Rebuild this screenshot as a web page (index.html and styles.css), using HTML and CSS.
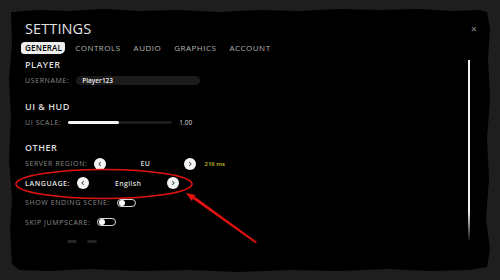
FILE: index.html
```html
<!DOCTYPE html>
<html lang="en">
<head>
  <meta charset="UTF-8">
  <meta name="viewport" content="width=device-width, initial-scale=1.0">
  <title>Settings</title>
  <link rel="stylesheet" href="styles.css">
</head>
<body>

  <!-- Settings panel -->
  <div class="panel">
    <div class="head">
      <h1 class="title">SETTINGS</h1>
      <button class="close">&times;</button>
    </div>

    <div class="tabs">
      <span class="tab active">GENERAL</span>
      <span class="tab">CONTROLS</span>
      <span class="tab">AUDIO</span>
      <span class="tab">GRAPHICS</span>
      <span class="tab">ACCOUNT</span>
    </div>

    <div class="main">
      <div class="content">

        <div class="section">
          <div class="section-title">PLAYER</div>
          <div class="row">
            <span class="label">USERNAME:</span>
            <div class="input">Player123</div>
          </div>
        </div>

        <div class="section">
          <div class="section-title">UI &amp; HUD</div>
          <div class="row">
            <span class="label">UI SCALE:</span>
            <div class="slider"><div class="slider-fill" style="width: 49%"></div></div>
            <span class="slider-value">1.00</span>
          </div>
        </div>

        <div class="section">
          <div class="section-title">OTHER</div>
          <div class="row">
            <span class="label">SERVER REGION:</span>
            <div class="selector">
              <span class="arrow-btn"><svg width="6" height="6" viewBox="0 0 6 6"><path d="M3.8 1 L2 3 L3.8 5" fill="none" stroke="#555" stroke-width="1.1"/></svg></span>
              <span class="selector-value">EU</span>
              <span class="arrow-btn"><svg width="6" height="6" viewBox="0 0 6 6"><path d="M2.2 1 L4 3 L2.2 5" fill="none" stroke="#555" stroke-width="1.1"/></svg></span>
            </div>
            <span class="ping">216 ms</span>
          </div>
          <div class="row">
            <span class="label strong">LANGUAGE:</span>
            <div class="selector">
              <span class="arrow-btn"><svg width="6" height="6" viewBox="0 0 6 6"><path d="M3.8 1 L2 3 L3.8 5" fill="none" stroke="#555" stroke-width="1.1"/></svg></span>
              <span class="selector-value">English</span>
              <span class="arrow-btn"><svg width="6" height="6" viewBox="0 0 6 6"><path d="M2.2 1 L4 3 L2.2 5" fill="none" stroke="#555" stroke-width="1.1"/></svg></span>
            </div>
          </div>
          <div class="row">
            <span class="label">SHOW ENDING SCENE:</span>
            <span class="toggle"><span class="knob"></span></span>
          </div>
          <div class="row">
            <span class="label">SKIP JUMPSCARE:</span>
            <span class="toggle"><span class="knob"></span></span>
          </div>
          <div class="row ghost">
            <span class="smudge"></span>
            <span class="smudge"></span>
          </div>
        </div>

      </div>
      <div class="scrollbar"></div>
    </div>
  </div>

  <!-- Red annotation drawn over the screenshot -->
  <svg class="annotation" width="500" height="280" viewBox="0 0 500 280">
    <ellipse cx="104" cy="184" rx="88" ry="14.5" fill="none" stroke="#e2130f" stroke-width="1.6"/>
    <polygon points="257,242 255.5,243.2 193,198.9 194.6,196.5" fill="#e2130f"/>
    <polygon points="186,193 195.6,195 191.6,201" fill="#e2130f"/>
  </svg>

</body>
</html>
```

FILE: styles.css
```css
body {
  font-family: "Open Sans", "Noto Sans", sans-serif;
  margin: 0;
  padding: 0;
  background-color: #1e1e1e;
  width: 500px;
  height: 280px;
  overflow: hidden;
  position: relative;
}

/* Panel with a torn, brushed edge */
.panel {
  margin: 9px 10px 8px 9px;
  height: 263px;
  box-sizing: border-box;
  padding: 11px 13px 0 16px;
  background-color: #000;
  display: flex;
  flex-direction: column;
  overflow: hidden;
  clip-path: polygon(
    2px 3px, 30px 1px, 60px 2px, 95px 0, 130px 2px, 170px 1px, 210px 3px,
    250px 1px, 290px 2px, 330px 0, 370px 1px, 410px 0, 445px 2px, 470px 1px,
    478px 3px, 481px 20px, 479px 50px, 481px 90px, 478px 130px, 480px 170px,
    477px 210px, 481px 240px, 478px 258px, 460px 261px, 420px 262px,
    380px 260px, 330px 262px, 280px 261px, 230px 263px, 180px 261px,
    130px 262px, 80px 260px, 40px 262px, 10px 261px, 3px 255px, 1px 220px,
    3px 190px, 0 150px, 2px 110px, 0 70px, 3px 35px
  );
}

.head {
  display: flex;
  justify-content: space-between;
  align-items: center;
  height: 18px;
}

.title {
  margin: 0;
  font-size: 14.5px;
  line-height: 18px;
  font-weight: 400;
  letter-spacing: 0.1px;
  color: #e4e4e4;
}

.close {
  background: none;
  border: none;
  padding: 0;
  color: #8c8c8c;
  font-family: inherit;
  font-size: 11px;
  line-height: 10px;
  cursor: pointer;
}

/* Tabs */
.tabs {
  display: flex;
  align-items: center;
  gap: 13px;
  height: 12px;
  margin-top: 4px;
  font-size: 8px;
  line-height: 12px;
  letter-spacing: 0.5px;
  color: #b4b4b4;
}

.tab.active {
  color: #000;
  font-weight: 600;
  background-color: #eee;
  margin-left: -4px;
  margin-right: -3px;
  padding: 0 3px 0 4px;
  letter-spacing: 0.2px;
  border-radius: 4px 2px 5px 3px;
}

.main {
  display: flex;
  flex: 1;
  margin-top: 3px;
  min-height: 0;
}

.content {
  flex: 1;
  padding-top: 2px;
}

.scrollbar {
  width: 2px;
  height: 180px;
  margin-top: 3px;
  margin-right: 7px;
  background: linear-gradient(#f2f2f2 0, #f2f2f2 84%, rgba(120, 120, 120, 0.15) 100%);
}

/* Sections */
.section + .section {
  margin-top: 10px;
}

.section-title {
  font-size: 9px;
  line-height: 12px;
  font-weight: 600;
  letter-spacing: 0.5px;
  color: #dedede;
}

.row {
  display: flex;
  align-items: center;
  height: 19.5px;
}

.label {
  font-size: 7px;
  letter-spacing: 0.6px;
  color: #8a8a8a;
  margin-right: 7px;
}

.label.strong {
  color: #e6e6e6;
  font-weight: 600;
}

.input {
  width: 118px;
  height: 9px;
  padding-left: 6px;
  border-radius: 5px;
  background-color: #1b1b1b;
  font-size: 6.5px;
  line-height: 9px;
  font-weight: 600;
  color: #eee;
}

/* Slider */
.slider {
  width: 104px;
  height: 3px;
  border-radius: 2px;
  background-color: #1c1c1c;
}

.slider-fill {
  height: 100%;
  border-radius: 2px;
  background-color: #f4f4f4;
}

.slider-value {
  margin-left: 7px;
  font-size: 6.5px;
  color: #ddd;
}

/* Arrow selectors */
.selector {
  display: flex;
  align-items: center;
  width: 102px;
}

.arrow-btn {
  width: 12px;
  height: 12px;
  border-radius: 50%;
  background-color: #f4f4f4;
  display: flex;
  justify-content: center;
  align-items: center;
}

.selector-value {
  flex: 1;
  text-align: center;
  font-size: 7px;
  font-weight: 600;
  letter-spacing: 0.3px;
  color: #dcdcdc;
}

.ping {
  margin-left: 8px;
  font-size: 6px;
  font-weight: 600;
  color: #c9c22a;
}

/* Toggles */
.toggle {
  width: 15px;
  height: 6px;
  border: 1.5px solid #d8d8d8;
  border-radius: 6px;
  display: flex;
  align-items: center;
  padding: 0 1px;
}

.knob {
  width: 6px;
  height: 6px;
  border-radius: 50%;
  background-color: #fff;
}

.row.ghost {
  padding-left: 42px;
  gap: 10px;
}

.smudge {
  width: 10px;
  height: 3px;
  border-radius: 3px 3px 1px 1px;
  background-color: #232323;
}

/* Annotation overlay */
.annotation {
  position: absolute;
  top: 0;
  left: 0;
  pointer-events: none;
}
```
